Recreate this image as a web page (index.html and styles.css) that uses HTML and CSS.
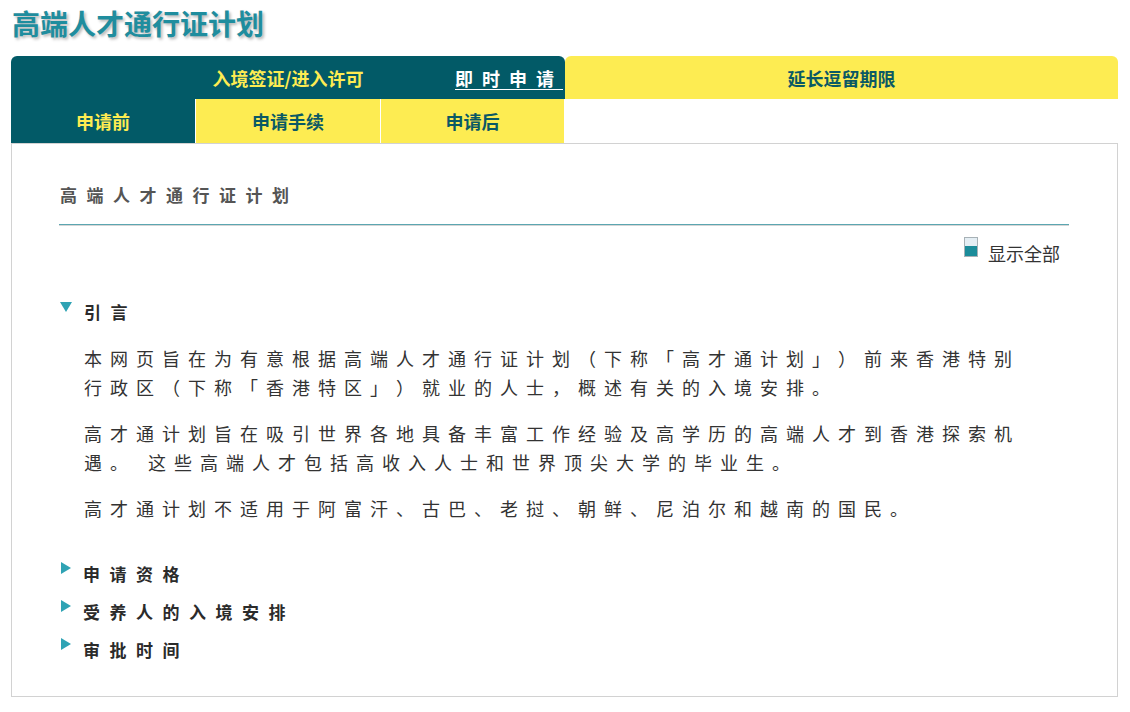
FILE: index.html
```html
<!DOCTYPE html>
<html lang="zh-CN">
<head>
<meta charset="utf-8">
<title>高端人才通行证计划</title>
<link rel="stylesheet" href="styles.css">
</head>
<body>
<h1 class="page-title">高端人才通行证计划</h1>

<div class="tabs">
  <div class="tab-group">
    <div class="group-head dark">
      <span></span>
      <span class="group-title">入境签证/进入许可</span>
      <a class="apply-link" href="#">即时申请</a>
    </div>
    <div class="subtabs">
      <div class="subtab current">申请前</div>
      <div class="subtab">申请手续</div>
      <div class="subtab">申请后</div>
    </div>
  </div>
  <div class="tab-group">
    <div class="group-head light">延长逗留期限</div>
  </div>
</div>

<div class="content">
  <div class="content-heading">高端人才通行证计划</div>
  <div class="show-all">
    <span class="show-icon"></span>
    <span class="show-text">显示全部</span>
  </div>

  <div class="section open">
    <div class="section-head"><span class="tri-down"></span><span class="section-title">引言</span></div>
    <div class="section-body">
      <p>本网页旨在为有意根据高端人才通行证计划（下称「高才通计划」）前来香港特别行政区（下称「香港特区」）就业的人士，概述有关的入境安排。</p>
      <p>高才通计划旨在吸引世界各地具备丰富工作经验及高学历的高端人才到香港探索机遇。 这些高端人才包括高收入人士和世界顶尖大学的毕业生。</p>
      <p>高才通计划不适用于阿富汗、古巴、老挝、朝鲜、尼泊尔和越南的国民。</p>
    </div>
  </div>
  <div class="section">
    <div class="section-head"><span class="tri-right"></span><span class="section-title">申请资格</span></div>
  </div>
  <div class="section">
    <div class="section-head"><span class="tri-right"></span><span class="section-title">受养人的入境安排</span></div>
  </div>
  <div class="section">
    <div class="section-head"><span class="tri-right"></span><span class="section-title">审批时间</span></div>
  </div>
</div>
</body>
</html>
```

FILE: styles.css
```css
* { box-sizing: border-box; }

body {
  margin: 0;
  background: #ffffff;
  font-family: "Noto Sans CJK SC", "Noto Sans", sans-serif;
  color: #333333;
  text-spacing-trim: space-all;
}

.page-title {
  margin: 0 0 15px 0;
  padding: 5px 0 0 12px;
  font-size: 28px;
  line-height: 36px;
  font-weight: bold;
  color: #1f8d9e;
  text-shadow: 2px 2px 3px rgba(0, 0, 0, 0.28);
}

.tabs {
  display: grid;
  grid-template-columns: 554px 553px;
  margin: 0 12px 0 11px;
}

.group-head {
  height: 43px;
  border-radius: 6px 6px 0 0;
  font-size: 18px;
  font-weight: bold;
  line-height: 24px;
}

.group-head.dark {
  background: #025a67;
  display: grid;
  grid-template-columns: 1fr auto 1fr;
  align-items: center;
}

.group-head.light {
  background: #fdec52;
  color: #0b5965;
  display: flex;
  align-items: center;
  justify-content: center;
}

.group-title {
  color: #fdec52;
}

.apply-link {
  justify-self: end;
  margin-right: 2px;
  color: #ffffff;
  text-decoration: underline;
  text-underline-offset: 3px;
  letter-spacing: 9px;
  font-size: 18px;
}

.subtabs {
  display: grid;
  grid-template-columns: 184px 184px 183px;
  gap: 1px;
  width: 553px;
  background: #025a67;
}

.subtab {
  height: 44px;
  display: flex;
  align-items: center;
  justify-content: center;
  font-size: 18px;
  font-weight: bold;
  color: #0b5965;
  background: #fdec52;
  box-shadow: -1px 0 0 #ffffff;
}

.subtab.current {
  background: #025a67;
  color: #fdec52;
  box-shadow: none;
}

.content {
  margin: 0 12px 0 11px;
  border: 1px solid #d2d2d2;
  padding: 0 48px 32px 47px;
}

.content-heading {
  padding: 39px 0 17px 1px;
  font-size: 17px;
  line-height: 24px;
  font-weight: bold;
  letter-spacing: 9.5px;
  color: #555555;
  border-bottom: 1px solid #5ba6b1;
  box-shadow: 0 1px 0 #d5d5d5;
}

.show-all {
  display: flex;
  justify-content: flex-end;
  align-items: flex-start;
  margin-top: 14px;
  padding-right: 9px;
}

.show-icon {
  width: 14px;
  height: 20px;
  margin-top: -2px;
  margin-right: 10px;
  border: 1px solid #a7b1b6;
  background: linear-gradient(#e4eef4 0, #e4eef4 45%, #1b8c9a 45%, #1b8c9a 100%);
}

.show-text {
  font-size: 18px;
  line-height: 28px;
  color: #333333;
}

.section {
  margin-left: 1px;
}

.section.open {
  margin-top: 31px;
}

.section + .section {
  margin-top: 10px;
}

.section-head {
  display: flex;
  align-items: flex-start;
  line-height: 28px;
}

.tri-down {
  width: 0;
  height: 0;
  margin-top: 4px;
  margin-right: 12px;
  border-left: 6px solid transparent;
  border-right: 6px solid transparent;
  border-top: 10px solid #2fa3b4;
}

.tri-right {
  width: 0;
  height: 0;
  margin-top: 2px;
  margin-left: 1px;
  margin-right: 12px;
  border-top: 6px solid transparent;
  border-bottom: 6px solid transparent;
  border-left: 10px solid #2fa3b4;
}

.section-title {
  font-size: 17px;
  font-weight: bold;
  letter-spacing: 9.5px;
  color: #2b2b2b;
}

.section-body {
  padding: 18px 24px 27px 24px;
}

.section-body p {
  margin: 0 0 17px 0;
  font-size: 18px;
  line-height: 29px;
  letter-spacing: 8px;
  color: #333333;
  text-spacing-trim: space-all;
}

.section-body p:last-child {
  margin-bottom: 0;
}
```
